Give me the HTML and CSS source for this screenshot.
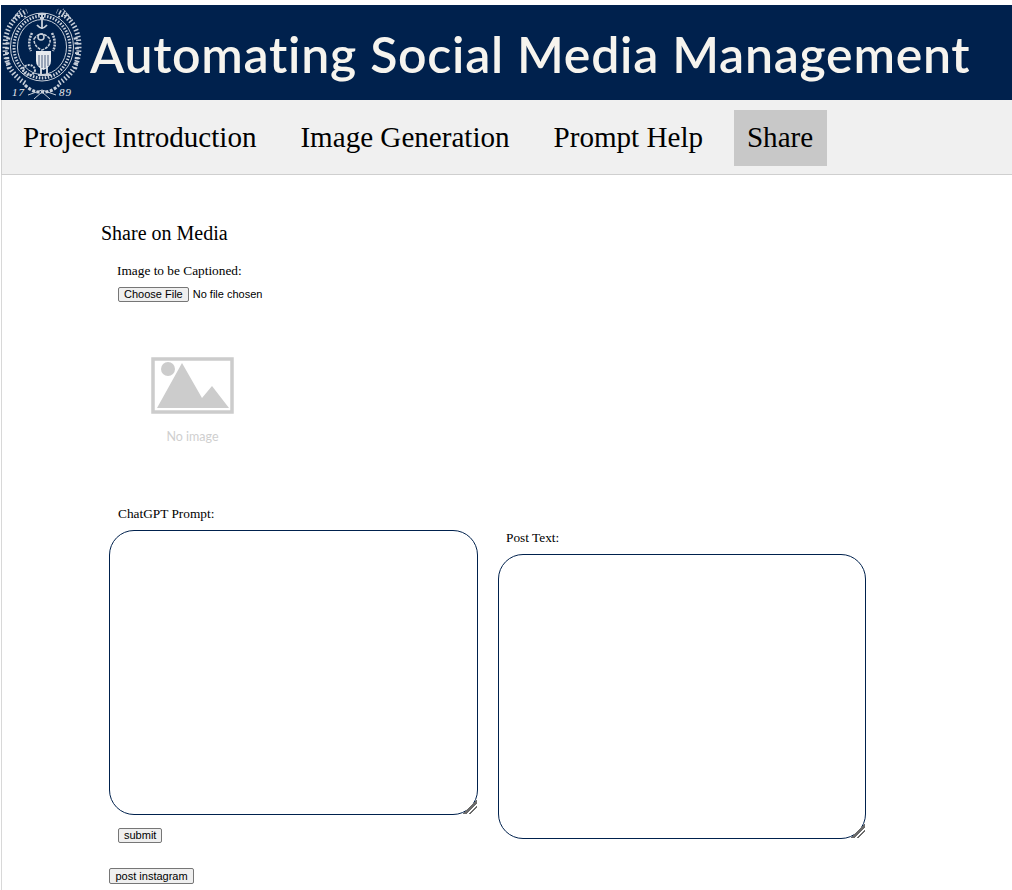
FILE: index.html
```html
<!DOCTYPE html>
<html lang="en">
<head>
    <meta charset="UTF-8">
    <meta name="viewport" content="width=device-width, initial-scale=1.0">
    <title>Automating Social Media Management</title>
    <link rel="stylesheet" href="styles.css">
</head>

<body>

<!-- Banner -->
<div class="banner">
    <svg class="seal" width="87" height="95" viewBox="0 0 87 95" aria-hidden="true">
        <g fill="none" stroke="#c9d0da">
            <!-- wreath -->
            <path d="M24 78 Q4 66 4 42 Q4 16 26 6 M58 78 Q78 66 78 42 Q78 16 56 6" stroke-width="5" stroke-dasharray="1.5 2"/>
            <path d="M8 64 Q4 48 8 30 M74 64 Q78 48 74 30" stroke-width="4" stroke-dasharray="2 3"/>
            <path d="M12 14 L20 4 M70 14 L62 4 M14 10 L26 12 M68 10 L56 12" stroke-width="1.5" stroke-dasharray="2 1"/>
            <path d="M24 80 Q32 88 41 87 Q50 88 58 80" stroke-width="3" stroke-dasharray="3 1.5"/>
            <path d="M27 90 L41 85 L55 90 M33 94 L41 87 L49 94" stroke-width="1"/>
            <!-- rings -->
            <ellipse cx="41" cy="42" rx="31.5" ry="34" stroke-width="1"/>
            <ellipse cx="41" cy="42" rx="28" ry="31" stroke-width="3" stroke-dasharray="1.5 1.5"/>
            <ellipse cx="41" cy="42" rx="24.5" ry="27.5" stroke-width="1"/>
            <!-- torch -->
            <path d="M37 9 H45 M39 13 H43 M41 9 V24 M36 20 Q41 26 46 20" stroke-width="1.8"/>
            <!-- eagle -->
            <path d="M31 28 Q26 38 30 46 M51 28 Q56 38 52 46" stroke-width="2.5" stroke-dasharray="2 1"/>
            <path d="M33 34 Q40 24 49 34 Q50 42 41 45 Q33 42 33 34 Z" stroke-width="1.5" stroke-dasharray="3 1"/>
            <circle cx="40" cy="32" r="3" stroke-width="1.5"/>
            <!-- lower emblems -->
            <ellipse cx="28" cy="65" rx="6" ry="5" stroke-width="2" stroke-dasharray="2 1"/>
            <path d="M40 62 V70 M46 62 V70 M37 70 H50" stroke-width="2"/>
        </g>
        <path d="M35 46 H50 V56 Q50 62 42.5 65 Q35 62 35 56 Z" fill="#e6e9ee"/>
        <path d="M38 50 V61 M41 50 V63 M44 50 V63 M47 50 V61" stroke="#4a5f80" fill="none"/>
        <text class="seal-year" x="11" y="91">17</text>
        <text class="seal-year" x="58" y="91">89</text>
    </svg>
    <span class="banner-title">Automating Social Media Management</span>
</div>

<!-- Navigation -->
<div class="nav">
    <a class="nav-link" href="#">Project Introduction</a>
    <a class="nav-link" href="#">Image Generation</a>
    <a class="nav-link" href="#">Prompt Help</a>
    <a class="nav-link active" href="#">Share</a>
</div>

<form class="share-form">
    <h2>Share on Media</h2>

    <label class="caption-label" for="image">Image to be Captioned:</label>
    <input class="file-input" type="file" id="image" name="image">

    <div class="preview">
        <svg width="83" height="57" viewBox="0 0 83 57" aria-hidden="true">
            <rect x="2" y="2" width="79" height="53" fill="none" stroke="#cccccc" stroke-width="3.5"/>
            <circle cx="17" cy="12" r="7" fill="#cccccc"/>
            <path d="M6 51 L31 6 L51 41 L61 29 L78 51 Z" fill="#cccccc"/>
        </svg>
        <span class="preview-text">No image</span>
    </div>

    <div class="text-columns">
        <div class="text-column">
            <label class="column-label" for="prompt">ChatGPT Prompt:</label>
            <textarea id="prompt" name="prompt"></textarea>
            <button class="submit-button" type="button">submit</button>
            <button class="post-button" type="button">post instagram</button>
        </div>
        <div class="text-column post-column">
            <label class="column-label" for="post">Post Text:</label>
            <textarea id="post" name="post"></textarea>
        </div>
    </div>
</form>

</body>
</html>
```

FILE: styles.css
```css
html, body {
    height: 100%;
}
body {
    font-family: "Liberation Serif", serif;
    margin: 0;
    padding: 5px 0 0 1px;
    box-sizing: border-box;
    background-color: #fff;
    overflow: hidden;
}
.banner {
    display: flex;
    align-items: flex-start;
    height: 95px;
    background-color: #00214d;
}
.seal {
    flex: none;
}
.seal-year {
    font-family: "Liberation Serif", serif;
    font-style: italic;
    font-size: 11px;
    letter-spacing: 1px;
    fill: #e6e9ee;
}
.banner-title {
    margin-left: 2px;
    font-family: "Lato", sans-serif;
    font-weight: 600;
    font-size: 50px;
    line-height: 98px;
    letter-spacing: 0.73px;
    white-space: nowrap;
    color: #f6f4ee;
}
.nav {
    display: flex;
    height: 75px;
    padding: 10px 0 0 8px;
    box-sizing: border-box;
    background-color: #f0f0f0;
    border-left: 1px solid #d0d0d0;
    border-bottom: 1px solid #cfcfcf;
}
.nav-link {
    height: 56px;
    padding: 0 13px;
    margin-right: 17.9px;
    font-size: 29.1px;
    line-height: 55px;
    color: #000;
    text-decoration: none;
}
.nav-link.active {
    padding: 0 13.5px 0 13px;
    background-color: #c8c8c8;
}
.share-form {
    height: calc(100% - 170px);
    padding: 46px 0 0 99px;
    box-sizing: border-box;
    border-left: 1px solid #d8d8d8;
    overflow: hidden;
}
h2 {
    margin: 0;
    font-size: 20px;
    font-weight: normal;
    line-height: 24px;
}
.caption-label, .column-label {
    display: block;
    font-size: 13.33px;
    line-height: 15px;
}
.caption-label {
    margin: 18px 0 0 16px;
}
.file-input {
    display: block;
    margin: 9px 0 0 17px;
    font-family: "Liberation Sans", sans-serif;
    font-size: 11px;
    color: #000;
}
.file-input::file-selector-button {
    margin-right: 4px;
    padding: 0 5px;
    height: 15px;
    font-size: 11px;
    line-height: 13px;
    color: #000;
    background-color: #efefef;
    border: 1px solid #767676;
    border-radius: 2px;
}
.preview {
    display: flex;
    flex-direction: column;
    align-items: flex-start;
    width: 83px;
    margin: 55px 0 0 50px;
}
.preview-text {
    align-self: center;
    margin-top: 15px;
    font-family: "Lato", sans-serif;
    font-size: 12.5px;
    line-height: 15px;
    color: #cfcfcf;
    white-space: nowrap;
}
.text-columns {
    display: flex;
    gap: 20px;
    margin: 62px 0 0 8px;
}
.text-column {
    display: flex;
    flex-direction: column;
    align-items: flex-start;
    width: 369px;
}
.post-column {
    padding-top: 24px;
}
.column-label {
    margin: 0 0 9px 9px;
}
.post-column .column-label {
    margin-left: 8px;
}
textarea {
    display: block;
    width: 369px;
    height: 285px;
    box-sizing: border-box;
    padding: 2px;
    border: 1px solid #00214d;
    border-radius: 25px;
    outline: none;
}
textarea::-webkit-resizer {
    background: linear-gradient(135deg, transparent 52%, #6b6b6b 52%, #6b6b6b 64%, transparent 64%, transparent 72%, #6b6b6b 72%, #6b6b6b 80%, transparent 80%);
}
.post-column textarea {
    width: 368px;
}
.submit-button, .post-button {
    font-family: "Liberation Sans", sans-serif;
    font-size: 11px;
    line-height: 13px;
    padding: 0 5px;
    color: #000;
    background-color: #efefef;
    border: 1px solid #767676;
    border-radius: 2px;
}
.submit-button {
    margin: 13px 0 0 9px;
}
.post-button {
    margin-top: 25px;
    padding: 0 5.5px;
    line-height: 14px;
}
```
